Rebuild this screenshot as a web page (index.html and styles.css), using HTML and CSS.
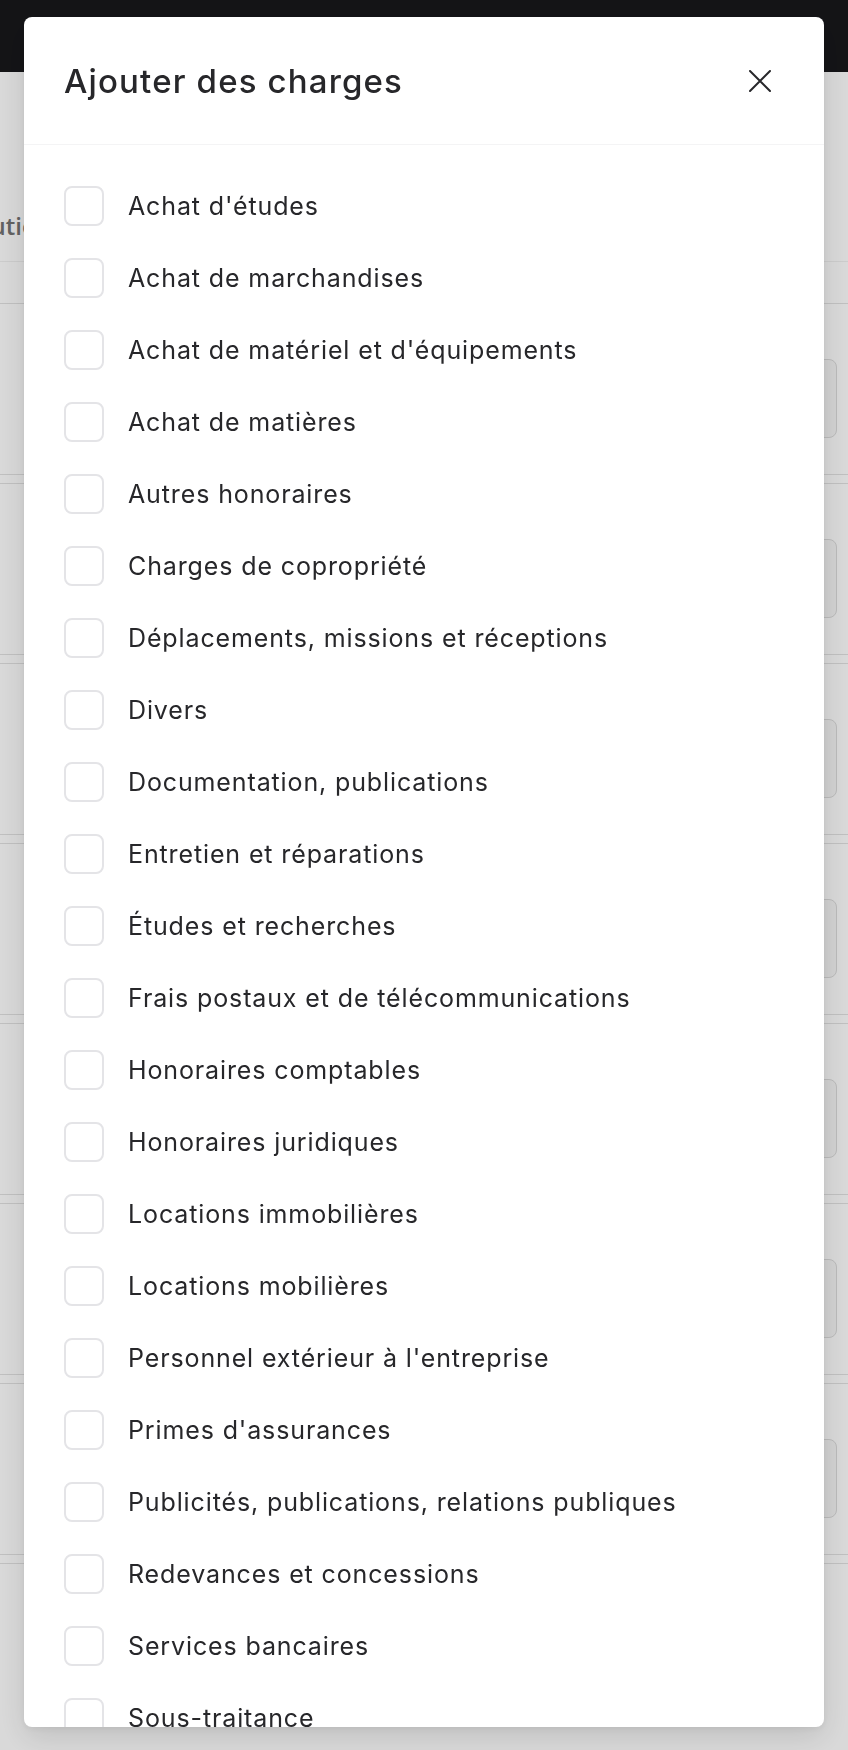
FILE: index.html
```html
<!DOCTYPE html>
<html lang="fr">
<head>
    <meta charset="UTF-8">
    <meta name="viewport" content="width=device-width, initial-scale=1.0">
    <title>Ajouter des charges</title>
    <link rel="stylesheet" href="styles.css">
</head>
<body>
    <div class="page">
        <div class="navbar"></div>
        <div class="tabs">
            <span class="tab">Contributions</span>
        </div>
        <div class="table">
            <div class="table-head"></div>
            <div class="row"><div class="field"></div></div>
            <div class="row"><div class="field"></div></div>
            <div class="row"><div class="field"></div></div>
            <div class="row"><div class="field"></div></div>
            <div class="row"><div class="field"></div></div>
            <div class="row"><div class="field"></div></div>
            <div class="row"><div class="field"></div></div>
            <div class="row row-last"></div>
        </div>
    </div>

    <div class="overlay">
        <div class="modal">
            <div class="modal-header">
                <h2 class="modal-title">Ajouter des charges</h2>
                <button class="close" aria-label="Fermer">
                    <svg width="22" height="22" viewBox="0 0 22 22" fill="none" stroke="currentColor" stroke-width="2" stroke-linecap="round">
                        <path d="M1 1 21 21M21 1 1 21"/>
                    </svg>
                </button>
            </div>
            <div class="modal-body">
                <label class="item"><input type="checkbox" class="check"> Achat d'études</label>
                <label class="item"><input type="checkbox" class="check"> Achat de marchandises</label>
                <label class="item"><input type="checkbox" class="check"> Achat de matériel et d'équipements</label>
                <label class="item"><input type="checkbox" class="check"> Achat de matières</label>
                <label class="item"><input type="checkbox" class="check"> Autres honoraires</label>
                <label class="item"><input type="checkbox" class="check"> Charges de copropriété</label>
                <label class="item"><input type="checkbox" class="check"> Déplacements, missions et réceptions</label>
                <label class="item"><input type="checkbox" class="check"> Divers</label>
                <label class="item"><input type="checkbox" class="check"> Documentation, publications</label>
                <label class="item"><input type="checkbox" class="check"> Entretien et réparations</label>
                <label class="item"><input type="checkbox" class="check"> Études et recherches</label>
                <label class="item"><input type="checkbox" class="check"> Frais postaux et de télécommunications</label>
                <label class="item"><input type="checkbox" class="check"> Honoraires comptables</label>
                <label class="item"><input type="checkbox" class="check"> Honoraires juridiques</label>
                <label class="item"><input type="checkbox" class="check"> Locations immobilières</label>
                <label class="item"><input type="checkbox" class="check"> Locations mobilières</label>
                <label class="item"><input type="checkbox" class="check"> Personnel extérieur à l'entreprise</label>
                <label class="item"><input type="checkbox" class="check"> Primes d'assurances</label>
                <label class="item"><input type="checkbox" class="check"> Publicités, publications, relations publiques</label>
                <label class="item"><input type="checkbox" class="check"> Redevances et concessions</label>
                <label class="item"><input type="checkbox" class="check"> Services bancaires</label>
                <label class="item"><input type="checkbox" class="check"> Sous-traitance</label>
            </div>
        </div>
    </div>
</body>
</html>
```

FILE: styles.css
```css
body {
    margin: 0;
    font-family: Inter, "Noto Sans", sans-serif;
    background-color: #fff;
    color: #27272a;
}

/* page behind the modal */
.page {
    overflow: hidden;
}

.navbar {
    height: 72px;
    background-color: #18181b;
}

.tabs {
    height: 190px;
    display: flex;
    align-items: flex-end;
    padding-bottom: 20px;
    box-sizing: border-box;
    border-bottom: 1px solid #f0f0f0;
}

.tab {
    margin-left: -96px;
    font-family: "Open Sans", sans-serif;
    font-size: 24px;
    font-weight: 600;
    line-height: 30px;
    color: #737373;
}

.table-head {
    height: 41px;
}

.row {
    height: 115px;
    border-top: 1px solid #e2e2e2;
    border-bottom: 1px solid #e2e2e2;
    margin-bottom: 8px;
    display: flex;
    justify-content: flex-end;
    align-items: flex-start;
    padding: 55px 11px 0 0;
}

.row-last {
    height: 48px;
    border-bottom: none;
    padding: 0;
}

.field {
    width: 300px;
    height: 77px;
    border: 1px solid #dcdcdc;
    border-radius: 8px;
    background-color: #f7f7f7;
}

/* modal */
.overlay {
    position: fixed;
    inset: 0;
    background-color: rgba(0, 0, 0, 0.15);
    padding: 17px 24px 23px;
}

.modal {
    height: 1710px;
    background-color: #fff;
    border-radius: 8px;
    box-shadow: 0 10px 30px rgba(0, 0, 0, 0.12), 0 2px 6px rgba(0, 0, 0, 0.06);
    display: flex;
    flex-direction: column;
    overflow: hidden;
}

.modal-header {
    display: flex;
    align-items: center;
    justify-content: space-between;
    padding: 40px 48px 39px 40px;
    border-bottom: 1px solid #f4f4f5;
}

.modal-title {
    margin: 0;
    font-size: 33px;
    font-weight: 500;
    line-height: 48px;
    letter-spacing: 0.035em;
    color: #27272a;
}

.close {
    width: 32px;
    height: 32px;
    padding: 0;
    border: none;
    background: none;
    display: flex;
    align-items: center;
    justify-content: center;
    color: #27272a;
    cursor: pointer;
}

.modal-body {
    flex: 1;
    overflow-y: auto;
    scrollbar-width: none;
    padding: 41px 40px 40px;
    display: flex;
    flex-direction: column;
    gap: 32px;
}

.item {
    display: flex;
    align-items: center;
    gap: 24px;
    font-size: 25px;
    line-height: 40px;
    letter-spacing: 0.035em;
    color: #27272a;
    cursor: pointer;
}

.check {
    appearance: none;
    flex-shrink: 0;
    width: 40px;
    height: 40px;
    margin: 0;
    border: 2px solid #e4e4e7;
    border-radius: 8px;
    background-color: #fff;
}
```
